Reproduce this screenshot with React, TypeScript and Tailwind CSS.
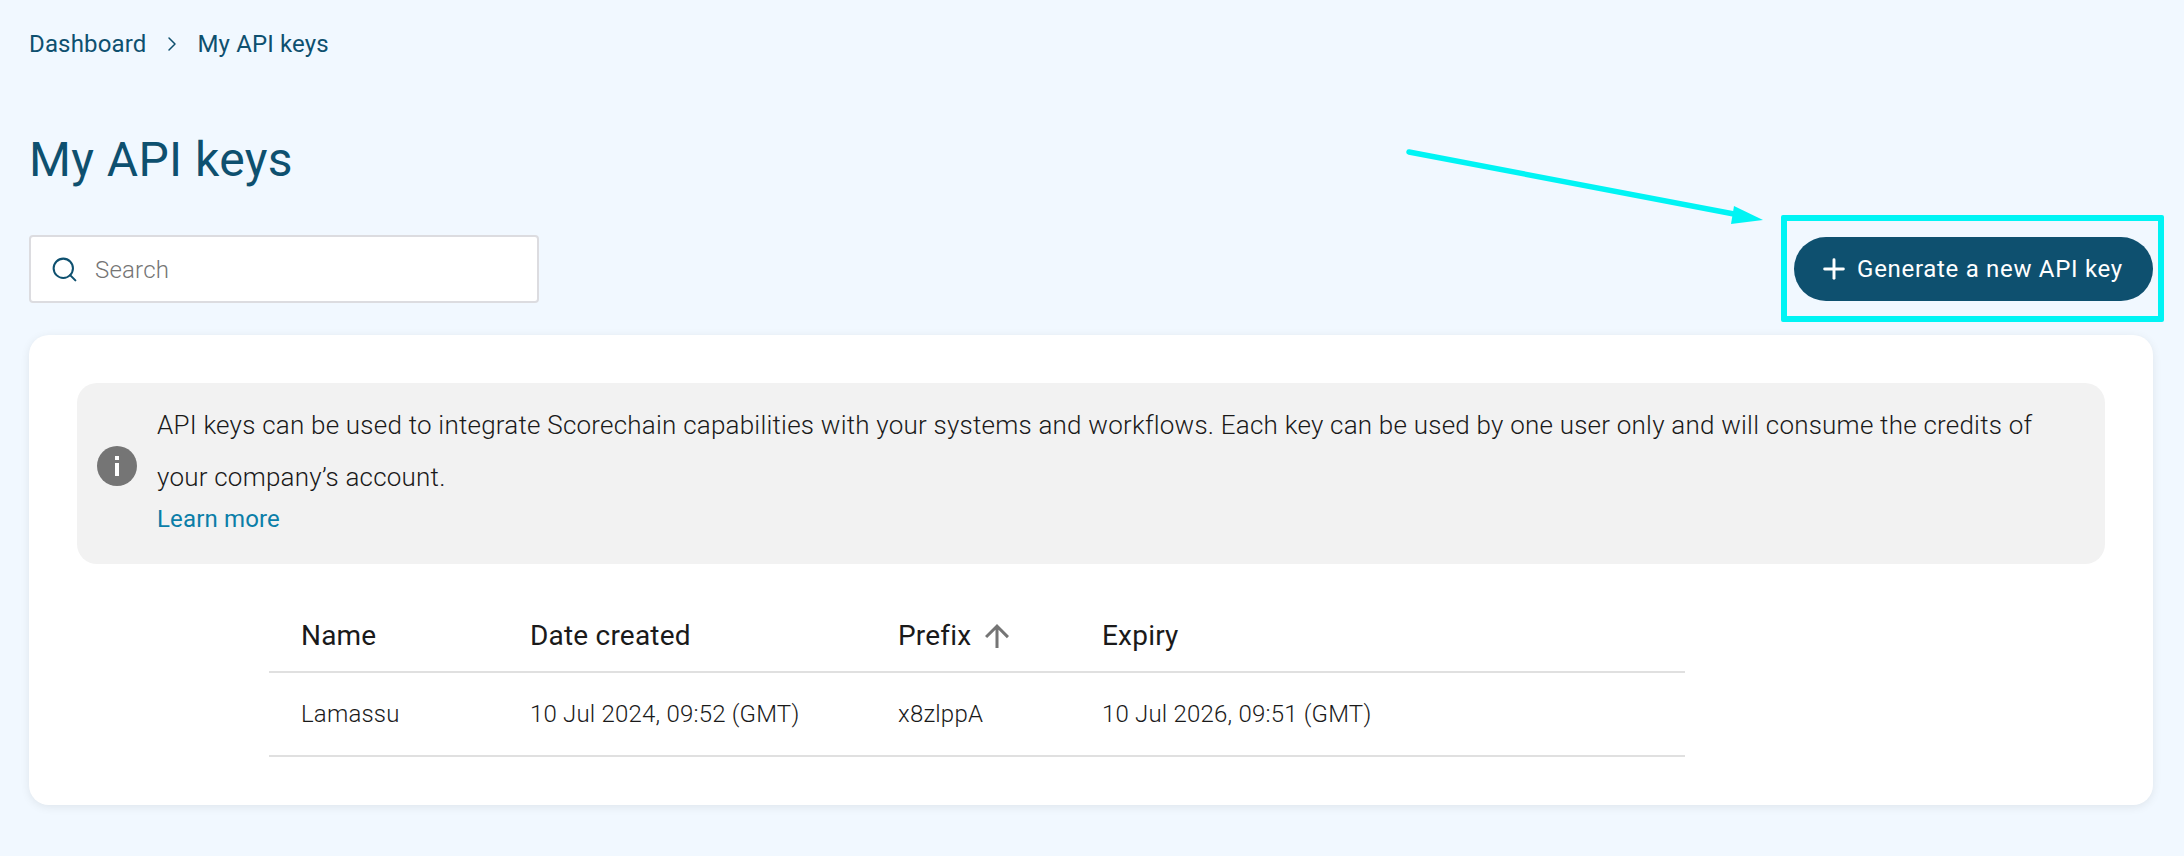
import { Search, ChevronRight, Plus } from "lucide-react";

const font = { fontFamily: "Roboto, sans-serif" };

export default function App() {
  return (
    <div style={font} className="relative h-[856px] w-full overflow-hidden bg-[#f1f8ff] pl-[29px] pr-[31px] pt-[29px]">
      <nav className="flex h-[30px] items-center text-[24px] leading-[30px] tracking-[0.15px] text-[#0e506f]">
        <span>Dashboard</span>
        <ChevronRight className="ml-[14px] mr-[13px] h-[24px] w-[24px]" strokeWidth={1.5} />
        <span>My API keys</span>
      </nav>
      <h1 className="mt-[71px] text-[48px] font-normal leading-[60px] tracking-[0.4px] text-[#0e506f]">My API keys</h1>
      <div className="mt-[45px] flex items-center justify-between">
        <div className="flex h-[68px] w-[510px] items-center rounded-[4px] border-2 border-[#dcdce0] bg-white pl-[19px]">
          <Search className="h-[29px] w-[29px] text-[#0e506f]" strokeWidth={1.7} />
          <span className="ml-[16px] translate-y-[1px] text-[24px] font-light tracking-[0.2px] text-[#757575]">Search</span>
        </div>
        <button className="flex h-[64px] w-[359px] items-center justify-center gap-[7px] rounded-full bg-[#0e506f] pr-[6px] text-[24px] tracking-[0.7px] text-white">
          <Plus className="h-[32px] w-[32px]" strokeWidth={2.2} />
          <span>Generate a new API key</span>
        </button>
      </div>
      <div className="mt-[32px] rounded-[20px] bg-white px-[48px] pb-[48px] pt-[48px] shadow-[0_2px_10px_rgba(0,0,0,0.08)]">
        <div className="flex h-[181px] items-center rounded-[20px] bg-[#f2f2f2] pb-[15px] pl-[20px] pr-[40px]">
          <svg viewBox="0 0 40 40" className="h-[40px] w-[40px] shrink-0">
            <circle cx="20" cy="20" r="20" fill="#757575" />
            <rect x="18" y="17" width="4" height="13" fill="#fff" />
            <rect x="18" y="10" width="4" height="4" fill="#fff" />
          </svg>
          <div className="ml-[20px] text-[26px] font-light tracking-[0.22px] text-[#1a1a1a]">
            <p className="leading-[52px]">
              API keys can be used to integrate Scorechain capabilities with your systems and workflows. Each key can be used by one user only and will consume the credits of your company’s account.
            </p>
            <a className="mt-[1px] block text-[24px] font-normal leading-[30px] tracking-[0.15px] text-[#0b7ea8]">Learn more</a>
          </div>
        </div>
        <table className="ml-[192px] mt-[36px] w-[1416px] table-fixed border-collapse text-left">
          <thead>
            <tr className="h-[72px] border-b-2 border-[#e0e0e0] text-[28px] tracking-[0.2px] text-[#1a1a1a]">
              <th className="w-[229px] pl-[32px] font-normal">Name</th>
              <th className="w-[368px] pl-[32px] font-normal">Date created</th>
              <th className="w-[204px] pl-[32px] font-normal">
                <span className="inline-flex items-center">
                  Prefix
                  <svg viewBox="0 0 24 24" className="ml-[8px] h-[36px] w-[36px]" fill="#757575">
                    <path d="M4 12l1.41 1.41L11 7.83V20h2V7.83l5.58 5.59L20 12l-8-8-8 8z" />
                  </svg>
                </span>
              </th>
              <th className="pl-[32px] font-normal">Expiry</th>
            </tr>
          </thead>
          <tbody>
            <tr className="h-[84px] border-b-2 border-[#e0e0e0] text-[24px] font-light tracking-[0.2px] text-[#1a1a1a]">
              <td className="pl-[32px]">Lamassu</td>
              <td className="pl-[32px]">10 Jul 2024, 09:52 (GMT)</td>
              <td className="pl-[32px]">x8zlppA</td>
              <td className="pl-[32px]">10 Jul 2026, 09:51 (GMT)</td>
            </tr>
          </tbody>
        </table>
      </div>
      <div className="absolute left-[1781px] top-[215px] h-[107px] w-[383px] rounded-[2px] border-[6px] border-[#00f4f4]" />
      <svg className="absolute left-[1400px] top-[145px] h-[85px] w-[370px]" viewBox="0 0 370 85">
        <line x1="9" y1="7" x2="334" y2="69" stroke="#00f4f4" strokeWidth="5.5" strokeLinecap="round" />
        <polygon points="334,61 363,75 331,79" fill="#00f4f4" />
      </svg>
    </div>
  );
}
